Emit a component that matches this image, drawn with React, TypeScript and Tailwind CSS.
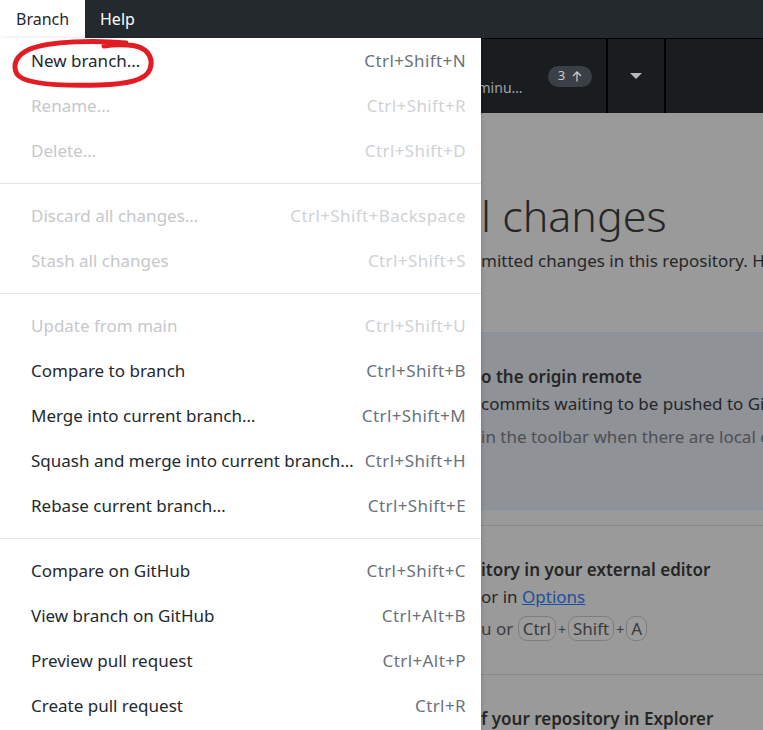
import React from 'react';

type Item = { label: string; keys: string; disabled?: boolean } | 'sep';

const menu: Item[] = [
  { label: 'New branch…', keys: 'Ctrl+Shift+N' },
  { label: 'Rename…', keys: 'Ctrl+Shift+R', disabled: true },
  { label: 'Delete…', keys: 'Ctrl+Shift+D', disabled: true },
  'sep',
  { label: 'Discard all changes…', keys: 'Ctrl+Shift+Backspace', disabled: true },
  { label: 'Stash all changes', keys: 'Ctrl+Shift+S', disabled: true },
  'sep',
  { label: 'Update from main', keys: 'Ctrl+Shift+U', disabled: true },
  { label: 'Compare to branch', keys: 'Ctrl+Shift+B' },
  { label: 'Merge into current branch…', keys: 'Ctrl+Shift+M' },
  { label: 'Squash and merge into current branch…', keys: 'Ctrl+Shift+H' },
  { label: 'Rebase current branch…', keys: 'Ctrl+Shift+E' },
  'sep',
  { label: 'Compare on GitHub', keys: 'Ctrl+Shift+C' },
  { label: 'View branch on GitHub', keys: 'Ctrl+Alt+B' },
  { label: 'Preview pull request', keys: 'Ctrl+Alt+P' },
  { label: 'Create pull request', keys: 'Ctrl+R' },
];

// a line of the dimmed page whose start is hidden under the open menu
const Row = ({ hidden, children, className = '' }: { hidden: string; children: React.ReactNode; className?: string }) => (
  <div className={`grid grid-cols-[481px_1fr] whitespace-nowrap ${className}`}>
    <span className="overflow-hidden text-right">{hidden}</span>
    <span className="overflow-hidden">{children}</span>
  </div>
);

const Kbd = ({ children }: { children: React.ReactNode }) => (
  <span className="inline-block px-[4px] leading-[23px] border border-[#7e7e7e] rounded-[9px] bg-[#9c9c9c]">{children}</span>
);

export default function App() {
  return (
    <div className="relative w-[763px] h-[730px] overflow-hidden bg-[#9a9a9a] font-['Noto_Sans',sans-serif]">
      <header className="h-[38px] bg-[#24292e] flex text-[16px]">
        <div className="w-[85px] bg-white text-[#24292e] flex items-center pl-4">Branch</div>
        <div className="pl-[15px] text-white flex items-center">Help</div>
      </header>

      <div className="h-[75px] bg-[#1a1d20] border-t border-black flex">
        <div className="w-[360px]" />
        <div className="w-[248px] border-r-2 border-black flex items-center pl-[22px]">
          <div className="w-[145px] text-[14px] leading-[19px] pt-[4px]">
            <div className="text-white truncate">Push origin</div>
            <div className="text-[#9ea3a8] truncate">Last fetched 5 minutes ago</div>
          </div>
          <span className="ml-[21px] h-[21px] w-[44px] rounded-full bg-[#3b4046] text-[#c7cbd0] text-[13px] flex items-center justify-center gap-[7px]">
            3
            <svg width="10" height="11" viewBox="0 0 10 11" fill="none" stroke="currentColor" strokeWidth="1.3">
              <path d="M5 10.5V1.2M1 5L5 1L9 5" />
            </svg>
          </span>
        </div>
        <div className="w-[58px] border-r-2 border-black flex items-center justify-center">
          <svg width="12" height="7" viewBox="0 0 12 7"><path d="M0 0H12L6 6Z" fill="#b5b8bb" /></svg>
        </div>
        <div className="flex-1" />
      </div>

      <main className="text-[#262626]">
        <Row hidden="No loca" className="mt-[75px] text-[43px] font-light leading-[56px]">l changes</Row>
        <Row hidden="There are no uncom" className="mt-[3px] text-[17px] leading-[27px]">mitted changes in this repository. Here are some friendly suggestions</Row>

        <div className="mt-[58px] h-[178px] bg-[#8f9297] border-y border-[#7f92aa] pt-[32px]">
          <Row hidden="Push commits t" className="text-[17px] font-semibold leading-[24px]">o the origin remote</Row>
          <Row hidden="You have 3 local" className="mt-[1px] text-[17px] leading-[27px]"> commits waiting to be pushed to GitHub.</Row>
          <Row hidden="Always available" className="mt-[8px] text-[17px] leading-[24px] text-[#4d4f52]"> in the toolbar when there are local commits waiting</Row>
        </div>

        <div className="mt-[15px] border-t border-[#8a8a8a] pt-[32px] h-[149px]">
          <Row hidden="Open the repos" className="text-[17px] font-semibold leading-[24px]">itory in your external editor</Row>
          <Row hidden="Select your edit" className="mt-[1px] text-[17px] leading-[27px]">
            or in <span className="text-[#1d4f9c] underline">Options</span>
          </Row>
          <Row hidden="Repository menu" className="mt-[5px] text-[17px] leading-[28px] text-[#3a3a3a]">
            u or <Kbd>Ctrl</Kbd><span className="mx-[2px] text-[14px]">+</span><Kbd>Shift</Kbd><span className="mx-[2px] text-[14px]">+</span><Kbd>A</Kbd>
          </Row>
        </div>

        <div className="border-t border-[#8a8a8a] pt-[32px]">
          <Row hidden="View the files o" className="text-[17px] font-semibold leading-[24px]">f your repository in Explorer</Row>
        </div>
      </main>

      <div className="absolute top-[38px] left-0 bottom-0 w-[481px] bg-white shadow-[1px_0_3px_rgba(0,0,0,0.15)] text-[17px]">
        {menu.map((item, i) =>
          item === 'sep' ? (
            <div key={i} className="h-[20px] flex items-center">
              <div className="w-full h-px bg-[#e1e4e8]" />
            </div>
          ) : (
            <div key={i} className="h-[45px] flex items-center justify-between pl-[31px] pr-[15px]">
              <span className={item.disabled ? 'text-[#c6c8cb]' : 'text-[#24292e]'}>{item.label}</span>
              <span className={`tracking-[0.4px] ${item.disabled ? 'text-[#d0d2d5]' : 'text-[#6a737d]'}`}>{item.keys}</span>
            </div>
          )
        )}
      </div>

      <svg className="absolute left-0 top-[36px] pointer-events-none" width="160" height="54" viewBox="0 0 160 54" fill="none">
        <path
          d="M126 7C96 4 50 5 30 13C16 19 12 29 17 38C23 48 60 50 100 49C125 48 146 45 150 33C154 21 147 10 128 9C118 8.5 110 9 104 10"
          stroke="#e31b23"
          strokeWidth="5"
          strokeLinecap="round"
        />
      </svg>
    </div>
  );
}
